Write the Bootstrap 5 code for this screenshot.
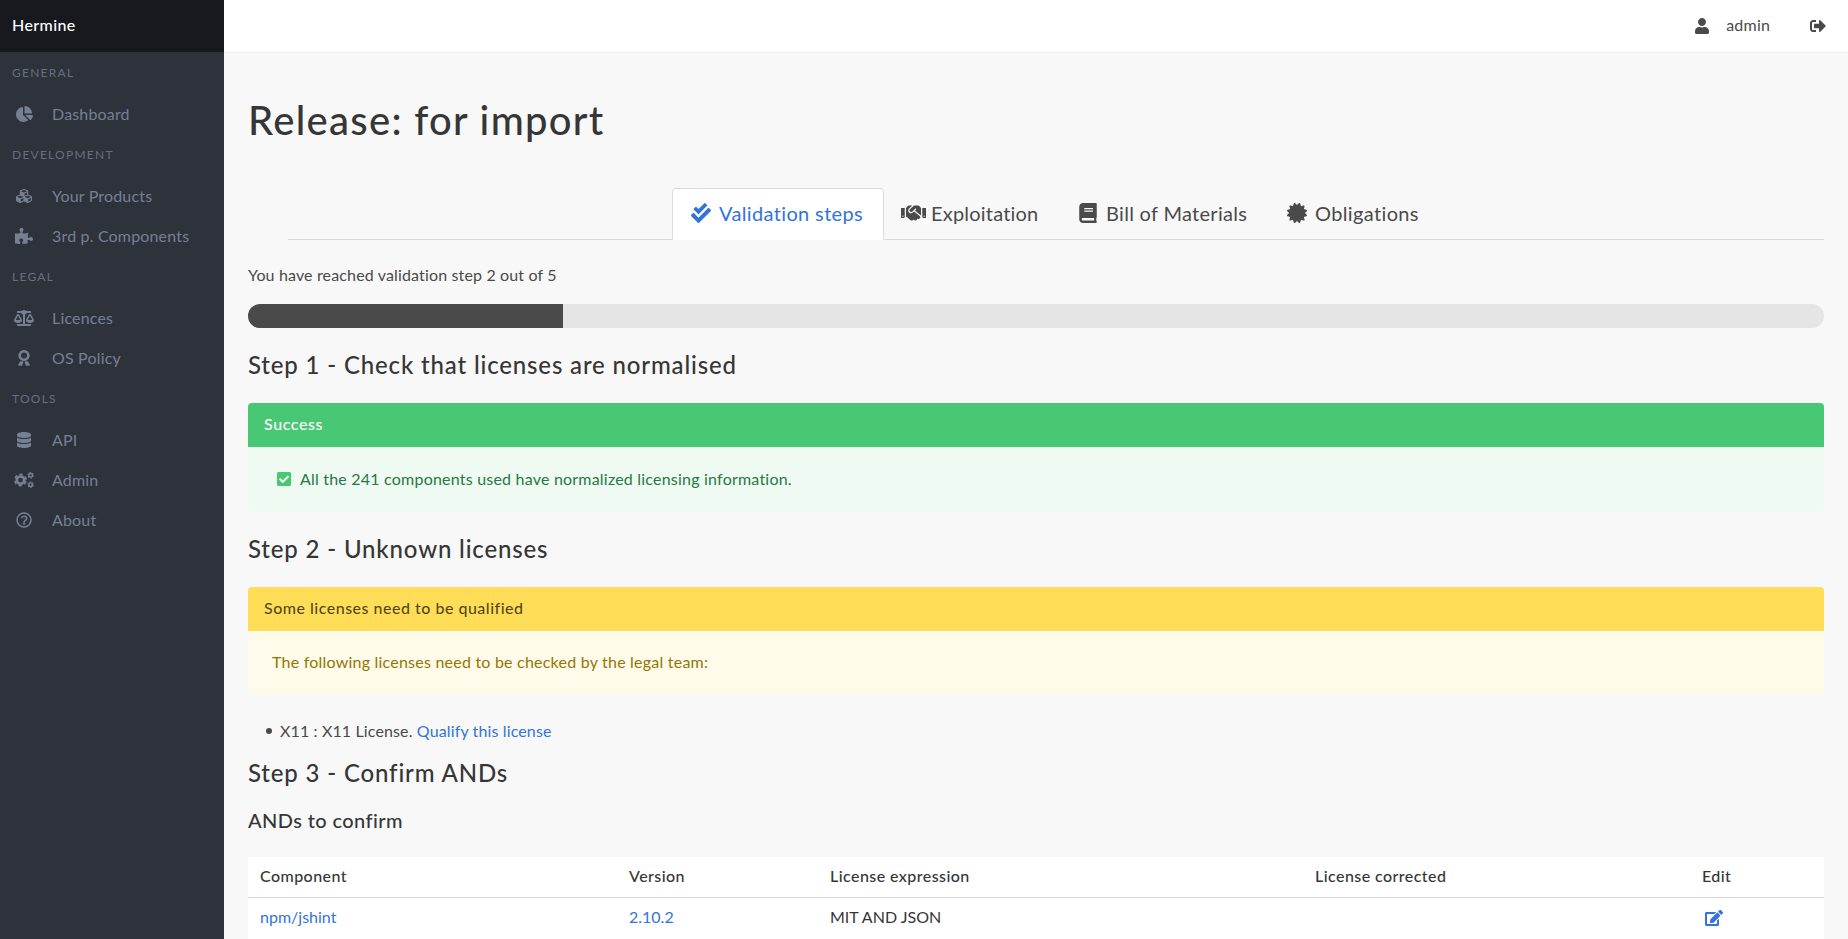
<!DOCTYPE html>
<html lang="en">
<head>
<meta charset="utf-8">
<title>Hermine</title>
<link href="https://cdn.jsdelivr.net/npm/bootstrap@5.3.0/dist/css/bootstrap.min.css" rel="stylesheet">
<style>
html,body{height:100%}
body{font-family:Lato,"Liberation Sans",sans-serif;font-size:16px;line-height:24px;color:#4a4a4a;background:#f8f8f8;letter-spacing:.2px;overflow:hidden}
a{color:#3273dc;text-decoration:none}
.fa{height:1em;fill:currentColor;display:block;flex:none}
.side{width:224px;background:#2e323a}
.brand{height:52px;background:#17191e;color:#fff;font-weight:500;letter-spacing:.4px;padding:0 12px 2px}
.menu-title{height:42px;line-height:42px;font-size:12px;letter-spacing:1.25px;color:#676e80;padding-left:12px;margin:0}
.menu-item{height:40px;color:#768095;line-height:40px;letter-spacing:.17px}
.menu-item .ic{width:48px;display:flex;justify-content:center}
.menu-item span:last-child{padding-left:4px}
.topbar{height:53px;background:#fff;border-bottom:1px solid #f0f0f0;padding:0 22px 1px 0}
.user-icon{margin-right:17px}
.user-name{margin-right:40px;padding-bottom:1px}
.main{padding:39px 24px 0}
h1{font-size:40px;font-weight:500;line-height:56px;letter-spacing:1.3px;color:#363636;margin:0 0 40px}
h2{font-size:24px;font-weight:500;line-height:27px;letter-spacing:.84px;color:#363636;margin:23px 0 25px}
h3{font-size:20px;font-weight:500;line-height:23px;letter-spacing:.4px;color:#363636;margin:0 0 25px}
.tabbar{margin-left:40px;height:52px;border-bottom:1px solid #dbdbdb;font-size:20px;justify-content:center;flex-wrap:nowrap}
.tabbar .nav-link{height:52px;border:1px solid transparent;border-radius:4px 4px 0 0;padding:0 0 2px;color:#4a4a4a;display:flex;align-items:center;white-space:nowrap;margin:0}
.tabbar .nav-link.active{background:#fff;border-color:#dbdbdb #dbdbdb #fff;color:#3273dc}
.tabbar .nav-link span{padding-bottom:1px}
.tabbar .tab-steps{width:212px;padding-left:18px;letter-spacing:.36px}
.tabbar .tab-exploit{width:174px;padding-left:16px;letter-spacing:.2px}
.tabbar .tab-bom{width:210px;padding-left:20px;letter-spacing:.3px}
.tabbar .tab-oblig{width:172px;padding-left:18px;letter-spacing:.36px}
.tab-exploit .fa{margin-right:5px}
.tab-bom .fa{margin-right:9px}
.reached{margin:23px 0 17px;letter-spacing:.15px}
.steps{height:24px;border-radius:12px;background:#e5e5e5}
.steps .progress-bar{background:#4a4a4a}
.notice{border-radius:4px;overflow:hidden}
.notice-head{height:44px;line-height:42px;padding:0 16px;font-weight:500;letter-spacing:.5px}
.notice-body{padding:20px 24px}
.ok .notice-head{background:#48c774;color:#fff;letter-spacing:.6px}
.ok .notice-body{background:#effaf3;color:#257942;height:65px;letter-spacing:.21px}
.ok .fa{margin:4px 9px 0 5px;color:#48c774}
.warn .notice-head{background:#ffdd57;color:rgba(0,0,0,.7)}
.warn .notice-body{background:#fffbeb;color:#947600;height:64px;padding-top:19px;letter-spacing:.22px}
.todo{margin:24px 0 0;padding-left:27px;list-style:none;letter-spacing:.13px}
.todo li{display:flex;align-items:center;margin-left:-9px}
.todo li::before{content:"";width:6px;height:6px;border-radius:50%;background:currentColor;margin-right:8px}
.todo+h2{margin:16px 0 23px}
.grid{table-layout:fixed;background:#fff;margin:0}
.grid>:not(caption)>*>*{padding:7px 12px 9px;background:#fff;border-bottom:1px solid #dbdbdb;color:#363636;box-shadow:none}
.grid>tbody>tr>td{padding-bottom:11px}
.grid th{font-weight:500;letter-spacing:.44px}
.grid td{letter-spacing:0}
.grid .fa{margin:5px 3px 0}
.col-comp{width:369px}.col-ver{width:201px}.col-expr{width:485px}.col-corr{width:387px}
</style>
</head>
<body>
<svg width="0" height="0" class="position-absolute">
<defs>
<symbol id="user" viewBox="0 0 448 512"><path d="M224 256c70.7 0 128-57.3 128-128S294.7 0 224 0 96 57.3 96 128s57.3 128 128 128zm89.6 32h-16.7c-22.2 10.2-46.9 16-72.9 16s-50.6-5.8-72.9-16h-16.7C60.2 288 0 348.2 0 422.4V464c0 26.5 21.5 48 48 48h352c26.5 0 48-21.5 48-48v-41.6c0-74.2-60.2-134.4-134.4-134.4z"/></symbol>
<symbol id="out" viewBox="0 0 512 512"><path d="M497 273L329 441c-15 15-41 4.5-41-17v-96H152c-13.3 0-24-10.7-24-24v-96c0-13.3 10.7-24 24-24h136V88c0-21.4 25.9-32 41-17l168 168c9.3 9.4 9.3 24.6 0 34zM192 436v-40c0-6.600-5.400-12-12-12H96c-17.700 0-32-14.300-32-32V160c0-17.700 14.300-32 32-32h84c6.600 0 12-5.400 12-12V76c0-6.600-5.400-12-12-12H96c-53 0-96 43-96 96v192c0 53 43 96 96 96h84c6.600 0 12-5.400 12-12z"/></symbol>
<symbol id="pie" viewBox="0 0 544 512"><path d="M527.790 288H290.500l158.030 158.030c6.040 6.040 15.980 6.530 22.190.68 38.700-36.460 65.320-85.610 73.130-140.860 1.340-9.460-6.510-17.850-16.060-17.850zm-15.830-64.800C503.720 103.740 408.260 8.280 288.800.04 279.680-.59 272 7.100 272 16.240V240h223.770c9.140 0 16.820-7.680 16.190-16.800zM224 288V50.710c0-9.550-8.390-17.400-17.840-16.060C86.990 51.490-4.100 155.600.14 280.370 4.500 408.510 114.830 513.590 243.030 511.980c50.400-.63 96.970-16.870 135.260-44.030 7.900-5.600 8.420-17.230 1.570-24.080L224 288z"/></symbol>
<symbol id="cubes" viewBox="0 0 512 512"><path d="M488.600 250.200L392 214V105.500c0-15-9.300-28.400-23.400-33.700l-100-37.500c-8.100-3.100-17.100-3.100-25.300 0l-100 37.500c-14.100 5.300-23.400 18.700-23.400 33.700V214l-96.600 36.200C9.300 255.500 0 268.900 0 283.900V394c0 13.600 7.700 26.100 19.900 32.200l100 50c10.100 5.100 22.100 5.100 32.200 0l103.900-52 103.900 52c10.100 5.100 22.100 5.100 32.200 0l100-50c12.200-6.100 19.900-18.600 19.900-32.200V283.900c0-15-9.300-28.400-23.400-33.700zM358 214.800l-85 31.900v-68.200l85-37v73.300zM154 104.100l102-38.200 102 38.200v.6l-102 41.400-102-41.400v-.6zm84 291.100l-85 42.500v-79.100l85-38.800v75.400zm0-112l-102 41.400-102-41.400v-.6l102-38.200 102 38.200v.6zm240 112l-85 42.500v-79.100l85-38.800v75.400zm0-112l-102 41.400-102-41.400v-.6l102-38.200 102 38.200v.6z"/></symbol>
<symbol id="puzzle" viewBox="0 0 576 512"><path d="M519.442 288.651c-41.519 0-59.500 31.593-82.058 31.593C377.409 320.244 432 144 432 144s-196.288 80-196.288-3.297c0-35.827 36.288-46.250 36.288-85.985C272 19.216 243.885 0 210.539 0c-34.654 0-66.366 18.891-66.366 56.346 0 41.364 31.711 59.277 31.711 81.750C175.885 207.719 0 166.758 0 166.758v333.237s178.635 41.047 178.635-28.662c0-22.473-40-40.107-40-81.471 0-37.456 29.250-56.346 63.577-56.346 33.673 0 61.788 19.216 61.788 54.717 0 39.735-36.288 50.158-36.288 85.985 0 60.803 129.675 25.730 181.230 25.730 0 0-34.725-120.101 25.827-120.101 35.962 0 46.423 36.152 86.308 36.152C556.712 416 576 387.990 576 354.443c0-34.199-18.962-65.792-56.558-65.792z"/></symbol>
<symbol id="scale" viewBox="0 0 640 512"><path d="M256 336h-.02c0-16.180 1.340-8.730-85.050-181.510-17.650-35.290-68.190-35.360-85.870 0C-2.060 328.750.02 320.330.02 336H0c0 44.180 57.310 80 128 80s128-35.820 128-80zM128 176l72 144H56l72-144zm511.980 160c0-16.180 1.340-8.730-85.050-181.510-17.650-35.290-68.190-35.360-85.870 0-87.120 174.260-85.040 165.840-85.040 181.510H384c0 44.180 57.310 80 128 80s128-35.820 128-80h-.02zM440 320l72-144 72 144H440zm88 128H352V153.250c23.510-10.290 41.160-31.480 46.390-57.250H528c8.840 0 16-7.160 16-16V48c0-8.840-7.160-16-16-16H383.640C369.040 12.680 346.090 0 320 0s-49.040 12.680-63.640 32H112c-8.840 0-16 7.160-16 16v32c0 8.840 7.160 16 16 16h129.610c5.230 25.760 22.870 46.960 46.390 57.250V448H112c-8.840 0-16 7.160-16 16v32c0 8.840 7.160 16 16 16h416c8.840 0 16-7.160 16-16v-32c0-8.840-7.160-16-16-16z"/></symbol>
<symbol id="award" viewBox="0 0 384 512"><circle cx="192" cy="176" r="136" fill="none" stroke="currentColor" stroke-width="76"/><circle cx="192" cy="176" r="170" fill="none" stroke="currentColor" stroke-width="22" stroke-dasharray="54 35"/><path d="M70 362l-66 118c-5 14 2 17 12 17l55-3 38 17c8 3 14-2 17-8l48-124-50-22zM314 362l66 118c5 14-2 17-12 17l-55-3-38 17c-8 3-14-2-17-8l-48-124 50-22z"/></symbol>
<symbol id="db" viewBox="0 0 448 512"><path d="M448 73.143v45.714C448 159.143 347.667 192 224 192S0 159.143 0 118.857V73.143C0 32.857 100.333 0 224 0s224 32.857 224 73.143zM448 176v102.857C448 319.143 347.667 352 224 352S0 319.143 0 278.857V176c48.125 33.143 136.208 48.572 224 48.572S399.874 209.143 448 176zm0 160v102.857C448 479.143 347.667 512 224 512S0 479.143 0 438.857V336c48.125 33.143 136.208 48.572 224 48.572S399.874 369.143 448 336z"/></symbol>
<symbol id="cogs" viewBox="0 0 640 512"><g fill="none" stroke="currentColor"><circle cx="208" cy="256" r="120" stroke-width="88"/><circle cx="208" cy="256" r="180" stroke-width="54" stroke-dasharray="104 84.500" stroke-dashoffset="-42"/><circle cx="532" cy="106" r="58" stroke-width="46"/><circle cx="532" cy="106" r="86" stroke-width="34" stroke-dasharray="50 40"/><circle cx="532" cy="406" r="58" stroke-width="46"/><circle cx="532" cy="406" r="86" stroke-width="34" stroke-dasharray="50 40"/></g></symbol>
<symbol id="help" viewBox="0 0 512 512"><g fill="none" stroke="currentColor" stroke-width="48"><circle cx="256" cy="256" r="224"/><path d="M172 202c12-42 42-66 86-66 45 0 82 28 82 70 0 64-78 58-78 104v8" stroke-width="50"/></g><circle cx="258" cy="366" r="38"/></symbol>
<symbol id="checks" viewBox="0 0 512 512"><path d="M505 174.800l-39.600-39.600c-9.400-9.400-24.600-9.400-33.900 0L192 374.700 80.600 263.200c-9.400-9.400-24.600-9.400-33.900 0L7 302.900c-9.400 9.400-9.400 24.600 0 34L175 505c9.400 9.400 24.600 9.400 33.900 0l296-296.200c9.400-9.500 9.400-24.700.1-34zm-324.300 106c6.200 6.300 16.400 6.300 22.600 0l208-208.200c6.200-6.300 6.200-16.400 0-22.600L366.100 4.700c-6.200-6.300-16.400-6.300-22.600 0L192 156.200l-55.400-55.500c-6.200-6.300-16.400-6.300-22.600 0L68.700 146c-6.200 6.300-6.200 16.400 0 22.600l112 112.200z"/></symbol>
<symbol id="shake" viewBox="0 0 640 512"><path d="M434.700 64h-85.900c-8 0-15.700 3-21.600 8.400l-98.300 90c-.1.1-.2.3-.3.4-16.600 15.600-16.300 40.500-2.100 56 12.700 13.900 39.400 17.600 56.100 2.700.1-.1.3-.1.4-.2l79.900-73.200c6.500-5.900 16.700-5.500 22.600 1 6 6.500 5.500 16.600-1 22.600l-26.100 23.900L504 313.800c2.900 2.400 5.500 5 7.900 7.700V128l-54.600-54.600c-5.900-6-14.100-9.400-22.600-9.400zM544 128.200v223.900c0 17.700 14.300 32 32 32h64V128.200h-96zm48 223.900c-8.800 0-16-7.200-16-16s7.200-16 16-16 16 7.200 16 16-7.200 16-16 16zM0 384h64c17.700 0 32-14.300 32-32V128.200H0V384zm48-63.900c8.800 0 16 7.200 16 16s-7.200 16-16 16-16-7.200-16-16c0-8.900 7.200-16 16-16zm435.900 18.600L334.600 217.500l-30 27.500c-29.700 27.100-75.200 24.500-101.700-4.400-26.900-29.400-24.800-74.900 4.400-101.700L289.100 64h-83.800c-8.500 0-16.600 3.400-22.600 9.400L128 128v223.900h18.300l90.500 81.900c27.400 22.300 67.700 18.100 90-9.300l.2-.2 17.900 15.500c15.900 13 39.400 10.500 52.300-5.400l31.400-38.600 5.400 4.400c13.700 11.100 33.900 9.100 45-4.700l9.500-11.700c11.200-13.800 9.100-33.900-4.600-45.100z"/></symbol>
<symbol id="book" viewBox="0 0 448 512"><path d="M448 360V24c0-13.300-10.700-24-24-24H96C43 0 0 43 0 96v320c0 53 43 96 96 96h328c13.300 0 24-10.700 24-24v-16c0-7.500-3.500-14.300-8.900-18.700-4.200-15.400-4.200-59.300 0-74.700 5.400-4.300 8.900-11.100 8.900-18.600zM128 134c0-3.300 2.700-6 6-6h212c3.300 0 6 2.700 6 6v20c0 3.300-2.700 6-6 6H134c-3.300 0-6-2.700-6-6v-20zm0 64c0-3.300 2.700-6 6-6h212c3.300 0 6 2.700 6 6v20c0 3.300-2.700 6-6 6H134c-3.300 0-6-2.700-6-6v-20zm253.400 250H96c-17.700 0-32-14.300-32-32 0-17.600 14.400-32 32-32h285.400c-1.900 17.100-1.900 46.900 0 64z"/></symbol>
<symbol id="cert" viewBox="0 0 512 512"><path d="M458.622 255.920l45.985-45.005c13.708-12.977 7.316-36.039-10.664-40.339l-62.650-15.990 17.661-62.015c4.991-17.838-11.829-34.663-29.661-29.671l-61.994 17.667-15.984-62.671C337.085.197 313.765-6.276 300.990 7.228L256 53.570 211.011 7.229c-12.630-13.351-36.047-7.234-40.325 10.668l-15.984 62.671-61.995-17.667C74.870 57.907 58.056 74.738 63.046 92.572l17.661 62.015-62.650 15.990C.069 174.878-6.310 197.944 7.392 210.915l45.985 45.005-45.985 45.004c-13.708 12.977-7.316 36.039 10.664 40.339l62.650 15.990-17.661 62.015c-4.991 17.838 11.829 34.663 29.661 29.671l61.994-17.667 15.984 62.671c4.439 18.575 27.696 24.018 40.325 10.668L256 458.610l44.989 46.001c12.500 13.488 35.987 7.486 40.325-10.668l15.984-62.671 61.994 17.667c17.836 4.994 34.651-11.837 29.661-29.671l-17.661-62.015 62.650-15.990c17.987-4.302 24.366-27.367 10.664-40.339l-45.984-45.004z"/></symbol>
<symbol id="check" viewBox="0 0 448 512"><path d="M400 480H48c-26.510 0-48-21.490-48-48V80c0-26.510 21.490-48 48-48h352c26.510 0 48 21.490 48 48v352c0 26.510-21.490 48-48 48zm-204.686-98.059l184-184c6.248-6.248 6.248-16.379 0-22.627l-22.627-22.627c-6.248-6.248-16.379-6.249-22.628 0L184 302.745l-70.059-70.059c-6.248-6.248-16.379-6.248-22.628 0l-22.627 22.627c-6.248 6.248-6.248 16.379 0 22.627l104 104c6.249 6.250 16.379 6.250 22.628.001z"/></symbol>
<symbol id="edit" viewBox="0 0 576 512"><path d="M402.600 83.200l90.200 90.200c3.800 3.800 3.800 10 0 13.800L274.400 405.600l-92.800 10.300c-12.400 1.400-22.900-9.100-21.500-21.500l10.300-92.800L388.800 83.200c3.800-3.800 10-3.800 13.800 0zm162-22.900l-48.800-48.800c-15.200-15.200-39.900-15.200-55.200 0l-35.400 35.400c-3.800 3.800-3.800 10 0 13.800l90.200 90.200c3.800 3.800 10 3.800 13.800 0l35.400-35.400c15.200-15.300 15.200-40 0-55.200zM384 346.200V448H64V128h229.800c3.200 0 6.200-1.300 8.500-3.500l40-40c7.600-7.600 2.200-20.500-8.500-20.500H48C21.500 64 0 85.500 0 112v352c0 26.500 21.500 48 48 48h352c26.500 0 48-21.500 48-48V306.200c0-10.700-12.900-16-20.500-8.500l-40 40c-2.200 2.300-3.500 5.300-3.500 8.500z"/></symbol>
</defs>
</svg>
<div class="d-flex vh-100">
<aside class="side flex-shrink-0">
  <div class="brand d-flex align-items-center">Hermine</div>
  <p class="menu-title">GENERAL</p>
  <a class="menu-item d-flex align-items-center" href="#"><span class="ic"><svg class="fa" width="17"><use href="#pie"/></svg></span><span>Dashboard</span></a>
  <p class="menu-title">DEVELOPMENT</p>
  <a class="menu-item d-flex align-items-center" href="#"><span class="ic"><svg class="fa" width="16"><use href="#cubes"/></svg></span><span>Your Products</span></a>
  <a class="menu-item d-flex align-items-center" href="#"><span class="ic"><svg class="fa" width="18"><use href="#puzzle"/></svg></span><span>3rd p. Components</span></a>
  <p class="menu-title">LEGAL</p>
  <a class="menu-item d-flex align-items-center" href="#"><span class="ic"><svg class="fa" width="20"><use href="#scale"/></svg></span><span>Licences</span></a>
  <a class="menu-item d-flex align-items-center" href="#"><span class="ic"><svg class="fa" width="12"><use href="#award"/></svg></span><span>OS Policy</span></a>
  <p class="menu-title">TOOLS</p>
  <a class="menu-item d-flex align-items-center" href="#"><span class="ic"><svg class="fa" width="14"><use href="#db"/></svg></span><span>API</span></a>
  <a class="menu-item d-flex align-items-center" href="#"><span class="ic"><svg class="fa" width="20"><use href="#cogs"/></svg></span><span>Admin</span></a>
  <a class="menu-item d-flex align-items-center" href="#"><span class="ic"><svg class="fa" width="16"><use href="#help"/></svg></span><span>About</span></a>
</aside>
<div class="flex-grow-1">
  <header class="topbar d-flex align-items-center justify-content-end">
    <svg class="fa user-icon" width="14"><use href="#user"/></svg><span class="user-name">admin</span><svg class="fa" width="16"><use href="#out"/></svg>
  </header>
  <main class="main">
    <h1>Release: for import</h1>
    <ul class="nav tabbar">
      <li><a class="nav-link tab-steps active" href="#"><svg class="fa me-2" width="20"><use href="#checks"/></svg><span>Validation steps</span></a></li>
      <li><a class="nav-link tab-exploit" href="#"><svg class="fa" width="25"><use href="#shake"/></svg><span>Exploitation</span></a></li>
      <li><a class="nav-link tab-bom" href="#"><svg class="fa" width="18"><use href="#book"/></svg><span>Bill of Materials</span></a></li>
      <li><a class="nav-link tab-oblig" href="#"><svg class="fa me-2" width="20"><use href="#cert"/></svg><span>Obligations</span></a></li>
    </ul>
    <p class="reached">You have reached validation step 2 out of 5</p>
    <div class="progress steps"><div class="progress-bar" style="width:20%"></div></div>
    <h2>Step 1 - Check that licenses are normalised</h2>
    <section class="notice ok">
      <div class="notice-head">Success</div>
      <div class="notice-body d-flex"><svg class="fa" width="14"><use href="#check"/></svg>All the 241 components used have normalized licensing information.</div>
    </section>
    <h2>Step 2 - Unknown licenses</h2>
    <section class="notice warn">
      <div class="notice-head">Some licenses need to be qualified</div>
      <div class="notice-body">The following licenses need to be checked by the legal team:</div>
    </section>
    <ul class="todo"><li><span>X11 : X11 License. <a href="#">Qualify this license</a></span></li></ul>
    <h2>Step 3 - Confirm ANDs</h2>
    <h3>ANDs to confirm</h3>
    <table class="table grid">
      <colgroup><col class="col-comp"><col class="col-ver"><col class="col-expr"><col class="col-corr"><col></colgroup>
      <thead><tr><th>Component</th><th>Version</th><th>License expression</th><th>License corrected</th><th>Edit</th></tr></thead>
      <tbody><tr><td><a href="#">npm/jshint</a></td><td><a href="#">2.10.2</a></td><td>MIT AND JSON</td><td></td><td><a href="#"><svg class="fa" width="18"><use href="#edit"/></svg></a></td></tr></tbody>
    </table>
  </main>
</div>
</div>
<script src="https://cdn.jsdelivr.net/npm/bootstrap@5.3.0/dist/js/bootstrap.bundle.min.js"></script>
</body>
</html>
